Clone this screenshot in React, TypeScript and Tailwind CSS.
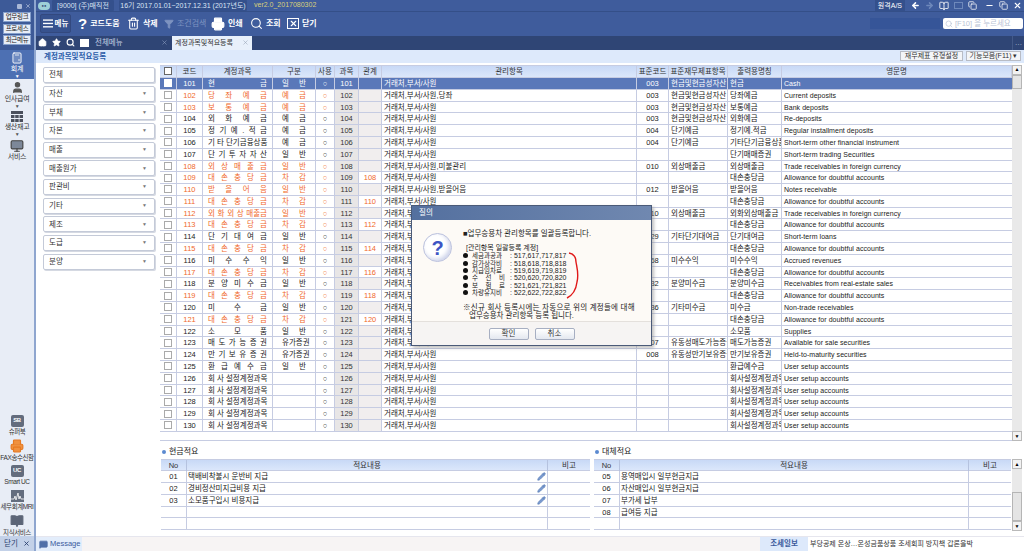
import React from "react";
import { Home, Star, Search, Printer, Trash2, Filter, ArrowLeft, ArrowRight, BookOpen, Minus, X, Calculator, User, Monitor, Pencil, MessageSquareMore, Copy } from "lucide-react";

const KR = "[font-family:'Liberation_Sans','Noto_Sans_CJK_KR',sans-serif]";
const cols = "grid grid-cols-[17px_26px_70px_43px_19px_24px_23px_255px_32px_59px_54px_1fr]";
const heads = ["코드", "계정과목", "구분", "사용", "과목", "관계", "관리항목", "표준코드", "표준재무제표항목", "출력용명칭", "영문명"];
const MG = "거래처,부서/사원";
const AL = "Allowance for doubtful accounts";
const US = "User setup accounts";
const CA = "현금및현금성자산";
type R = [string, string, string, string, string, string, string, string, string, boolean];
const d = (c: string, r: string): R => [c, "대 손 충 당 금", "차 감", r, MG, "", "", "대손충당금", AL, true];
const rows: R[] = [
  ["101", "현 금", "일 반", "", MG, "003", CA, "현금", "Cash", false],
  ["102", "당 좌 예 금", "예 금", "", MG + ",당좌", "003", CA, "당좌예금", "Current deposits", true],
  ["103", "보 통 예 금", "예 금", "", MG, "003", CA, "보통예금", "Bank deposits", true],
  ["104", "외 화 예 금", "예 금", "", MG, "003", CA, "외화예금", "Re-deposits", false],
  ["105", "정 기 예 . 적 금", "예 금", "", MG, "004", "단기예금", "정기예.적금", "Regular installment deposits", false],
  ["106", "기 타 단기금융상품", "예 금", "", MG, "004", "단기예금", "기타단기금융상품", "Short-term other financial instrument", false],
  ["107", "단 기 투 자 자 산", "일 반", "", MG, "", "", "단기매매증권", "Short-term trading Securities", false],
  ["108", "외 상 매 출 금", "일 반", "", MG + ",미불관리", "010", "외상매출금", "외상매출금", "Trade receivables in foreign currency", true],
  d("109", "108"),
  ["110", "받 을 어 음", "일 반", "", MG + ",받을어음", "012", "받을어음", "받을어음", "Notes receivable", true],
  d("111", "110"),
  ["112", "외 화 외 상 매출금", "일 반", "", MG, "010", "외상매출금", "외화외상매출금", "Trade receivables in foreign currency", true],
  d("113", "112"),
  ["114", "단 기 대 여 금", "일 반", "", MG, "029", "기타단기대여금", "단기대여금", "Short-term loans", false],
  d("115", "114"),
  ["116", "미 수 수 익", "일 반", "", MG, "068", "미수수익", "미수수익", "Accrued revenues", false],
  d("117", "116"),
  ["118", "분 양 미 수 금", "일 반", "", MG, "032", "분양미수금", "분양미수금", "Receivables from real-estate sales", false],
  d("119", "118"),
  ["120", "미 수 금", "일 반", "", MG, "036", "기타미수금", "미수금", "Non-trade receivables", false],
  d("121", "120"),
  ["122", "소 모 품", "일 반", "", MG, "", "", "소모품", "Supplies", false],
  ["123", "매 도 가 능 증 권", "유가증권", "", MG, "007", "유동성매도가능증권", "매도가능증권", "Available for sale securities", false],
  ["124", "만 기 보 유 증 권", "유가증권", "", MG, "008", "유동성만기보유증권", "만기보유증권", "Held-to-maturity securities", false],
  ["125", "환 급 예 수 금", "일 반", "", MG, "", "", "환급예수금", US, false],
  ...["126", "127", "128", "129", "130"].map((c): R => [c, "회 사 설정계정과목", "", "", MG, "", "", "회사설정계정과목", US, false]),
];
const filters = ["전체", "자산", "부채", "자본", "매출", "매출원가", "판관비", "기타", "제조", "도급", "분양"];
const Cell = ({ children, className = "" }: { children?: React.ReactNode; className?: string }) => (
  <div className={`h-full overflow-hidden whitespace-nowrap border-r border-[#c6cce2] leading-[11px] ${className}`}>{children}</div>
);
const Scroll = ({ thumbClass }: { thumbClass: string }) => (
  <div className="flex w-[10px] flex-col bg-[#e9e9e9]">
    <div className="flex h-[10px] items-center justify-center border border-[#b9b9b9] bg-[#f2f2f2] text-[5px] leading-none text-black">▲</div>
    <div className={`border border-[#b5b5b5] bg-[#e4e4e4] ${thumbClass}`} />
    <div className="flex-1" />
    <div className="flex h-[10px] items-center justify-center border border-[#b9b9b9] bg-[#f2f2f2] text-[5px] leading-none text-black">▼</div>
  </div>
);
const Tool = ({ icon, label, className = "" }: { icon: React.ReactNode; label: string; className?: string }) => (
  <div className={`flex items-center gap-[3px] whitespace-nowrap text-[8px] font-bold text-white ${className}`}>{icon}<span>{label}</span></div>
);
const RailItem = ({ icon, label, arrow, active }: { icon: React.ReactNode; label: string; arrow?: boolean; active?: boolean }) => (
  <div className={`flex h-[29px] flex-col items-center pt-[2px] text-[7px] leading-[9px] tracking-[-0.3px] ${active ? "bg-[#4d70b3] text-white" : "text-[#333]"}`}>
    <div className="flex h-[13px] items-center">{icon}</div>
    <span className="whitespace-nowrap">{label}</span>
    {arrow && <span className={`text-[5px] leading-[6px] ${active ? "text-white" : "text-[#555]"}`}>▼</span>}
  </div>
);
const Tag = ({ t, color }: { t: string; color: string }) => (
  <div className={`flex h-[12px] w-[13px] items-center justify-center rounded-[2px] text-[6px] font-bold text-white ${color}`}>{t}</div>
);
const Low = ({ icon, label }: { icon: React.ReactNode; label: string }) => (
  <div className="flex h-[25px] flex-col items-center justify-start pt-[3px] text-[6.5px] leading-[9px] tracking-[-0.4px] text-[#333]">
    <div className="flex h-[14px] items-center">{icon}</div>
    <span className="whitespace-nowrap">{label}</span>
  </div>
);
const Mini = ({ title, rows: rs, pencil, className }: { title: string; rows: [string, string][]; pencil?: boolean; className: string }) => (
  <div className={`flex flex-col ${className}`}>
    <div className="flex h-[18px] items-center gap-[3px] pl-[1px] pt-[4px] text-[8px] text-[#222]">
      <span className="h-[4px] w-[4px] rounded-full bg-[#5b8ad0]" />{title}
    </div>
    <div className="grid h-[12px] grid-cols-[26px_1fr_42px] border-y border-[#c6cce2] bg-gradient-to-b from-[#c8d9f6] to-[#dbe7fb] text-center text-[7.5px] leading-[11px] text-[#333]">
      <div className="border-r border-[#b5c2df]">No</div><div className="border-r border-[#b5c2df]">적요내용</div><div>비고</div>
    </div>
    {[0, 1, 2, 3, 4].map((i) => (
      <div key={i} className="grid h-[11.8px] grid-cols-[26px_1fr_42px] border-b border-[#c6cce2] text-[7.5px] leading-[12px] text-[#222]">
        <div className="border-r border-[#c6cce2] text-center">{rs[i]?.[0]}</div>
        <div className="relative overflow-hidden whitespace-nowrap border-r border-[#c6cce2] pl-[1px]">
          {rs[i]?.[1]}
          {pencil && rs[i] && <Pencil className="absolute right-[1px] top-[1px] fill-[#7a9bd0] text-[#5c7fb8]" size={9} />}
        </div>
        <div />
      </div>
    ))}
  </div>
);

export default function App() {
  return (
    <div className={`relative flex h-[551px] w-[1024px] overflow-hidden bg-white text-[7.5px] ${KR}`}>
      {/* rail */}
      <div className="flex w-[36px] shrink-0 flex-col border-r-2 border-[#8fa6cf] bg-[#e8edf6]">
        <div className="flex h-[50px] flex-col bg-[#3d5a98] px-[3px]">
          <div className="flex h-[12px] items-center justify-end gap-[3px] text-[#a9b8d6]">
            <div className="h-[5px] w-[5px] rounded-[1px] bg-[#a9b8d6]" /><X size={6} strokeWidth={3} />
          </div>
          {["업무링크", "프로세스", "최근메뉴"].map((t) => (
            <div key={t} className="mb-[1.5px] flex h-[10px] items-center justify-center border border-[#86a0cc] bg-[#e7edf7] text-[6.5px] tracking-[-0.3px] text-[#222]">{t}</div>
          ))}
        </div>
        <RailItem active arrow label="회계" icon={<Calculator size={12} className="text-white" />} />
        <RailItem arrow label="인사급여" icon={<User size={13} className="fill-[#555] text-[#555]" />} />
        <RailItem arrow label="생산재고" icon={
          <svg width="12" height="11" viewBox="0 0 12 11" fill="#4a4f5c"><rect width="12" height="3" /><rect y="4" width="3.5" height="3" /><rect x="4.2" y="4" width="3.5" height="3" /><rect x="8.5" y="4" width="3.5" height="3" /><rect y="8" width="3.5" height="3" /><rect x="4.2" y="8" width="3.5" height="3" /><rect x="8.5" y="8" width="3.5" height="3" /></svg>
        } />
        <RailItem label="서비스" icon={<Monitor size={14} className="fill-[#7d8899] text-[#444]" />} />
        <div className="flex-1" />
        <Low label="슈퍼북" icon={<Tag t="SB" color="bg-[#636c7d]" />} />
        <Low label="FAX송수신함" icon={<Printer size={14} className="fill-[#f0913f] text-[#e67a22]" />} />
        <Low label="Smart UC" icon={<Tag t="UC" color="bg-[#636c7d]" />} />
        <Low label="세무회계MRI" icon={
          <svg width="13" height="12" viewBox="0 0 13 12"><rect width="13" height="12" fill="#646d7e" /><path d="M0 9h3l1-3 1 4 2-7 1 6 1-3 1 3h3" stroke="#fff" strokeWidth=".8" fill="none" /></svg>
        } />
        <Low label="지식서비스" icon={<BookOpen size={14} className="fill-[#5c6577] text-[#5c6577]" />} />
        <div className="flex h-[15px] items-center justify-center gap-[5px] bg-[#c3d1e8] text-[7.5px] text-[#29406f]">닫기 <X size={7} strokeWidth={3} /></div>
      </div>

      {/* main */}
      <div className="relative flex min-w-0 flex-1 flex-col">
        <div className="flex h-[12px] items-center border-b border-[#344f88] bg-[#3f5c9c] pl-[2px] text-[7px] text-[#dbe4f5]">
          <div className="flex h-[8px] w-[12px] shrink-0 items-center justify-center rounded-full bg-[#9ed0d8] text-[4px] text-[#29406f]">●●</div>
          <div className="ml-[2px] w-[62px] shrink-0 whitespace-nowrap rounded-[1px] bg-[#34508c] text-center leading-[11px]">[9000] (주)매직전</div>
          <div className="ml-[5px] w-[128px] shrink-0 whitespace-nowrap rounded-[1px] bg-[#34508c] text-center leading-[11px]">16기 2017.01.01~2017.12.31 (2017년도)</div>
          <div className="ml-[7px] whitespace-nowrap text-[#d8d07a]">ver2.0_2017080302</div>
          <div className="ml-auto flex items-center gap-[5px] pr-[2px] text-white">
            <span className="mr-[1px] whitespace-nowrap bg-[#34508c] px-[3px] text-[7px] leading-[11px]">원격A/S</span>
            <ArrowLeft size={9} strokeWidth={4} /><ArrowRight size={9} strokeWidth={4} className="text-[#6e88bb]" />
            <BookOpen size={10} /><div className="h-[7px] w-[9px] border border-[#6e88bb]" /><Copy size={9} />
            <Minus size={9} strokeWidth={3} className="ml-[3px]" /><Copy size={9} /><X size={9} strokeWidth={3} />
          </div>
        </div>
        <div className="flex h-[24px] items-center bg-[#3f5c9c] pl-[4px] pr-[1px]">
          <div className="flex h-[19px] w-[31px] items-center justify-center gap-[2px] whitespace-nowrap rounded-[2px] border border-[#33497f] bg-[#37528e] text-[7.5px] font-bold text-white">
            <svg width="10" height="9" viewBox="0 0 11 9" fill="#fff"><rect width="11" height="1.5" /><rect y="3.7" width="11" height="1.5" /><rect y="7.4" width="11" height="1.5" /></svg>메뉴
          </div>
          <Tool className="ml-[7px] w-[49px]" icon={<span className="text-[15px] leading-none">?</span>} label="코드도움" />
          <Tool className="w-[37px]" icon={<Trash2 size={13} />} label="삭제" />
          <div className="flex w-[47px] items-center gap-[3px] whitespace-nowrap text-[8px] text-[#7d93c0]"><Filter size={10} className="fill-[#7d93c0]" /><span>조건검색</span></div>
          <Tool className="w-[39px]" icon={<Printer size={14} className="fill-white text-white" />} label="인쇄" />
          <Tool className="w-[37px]" icon={<Search size={13} />} label="조회" />
          <Tool icon={<div className="flex h-[11px] w-[12px] items-center justify-center border border-white"><X size={9} strokeWidth={3} /></div>} label="닫기" />
          <div className="ml-auto h-[11px] w-[70px] bg-[#365598]" />
          <div className="ml-[3px] flex h-[11px] w-[80px] items-center gap-[2px] whitespace-nowrap rounded-[2px] bg-white pl-[2px] text-[7.5px] text-[#b9c3d5]">
            <Search size={8} />[F10] 을 누르세요
          </div>
        </div>
        <div className="flex h-[14px] items-end bg-[#2f4575] pl-[2px] text-[7.5px]">
          <div className="flex h-full items-center gap-[5px] text-white">
            <Home size={9} className="fill-white" /><Star size={9} className="fill-white" /><Search size={9} strokeWidth={3} />
            <div className="h-[8px] w-[9px] bg-white" /><span className="ml-[1px] w-[61px] text-[#c4cfe3]">전체메뉴</span>
            <X size={7} className="text-[#8c9dbf]" />
          </div>
          <div className="ml-[4px] flex h-[14px] w-[80px] items-center justify-between whitespace-nowrap bg-[#e8f0fb] px-[3px] text-[7px] text-[#333]">
            계정과목및적요등록<X size={7} className="text-[#9aa5b8]" />
          </div>
          <div className="ml-auto flex h-full w-[12px] items-center justify-center border-l border-[#445a88] text-[#b4c0d8]">…</div>
        </div>
        <div className="flex h-[14px] items-center justify-between border-b border-white bg-[#dde9fb] pl-[8px] pr-[3px]">
          <span className="whitespace-nowrap text-[7.5px] font-bold text-[#2a5ba8]">계정과목및적요등록</span>
          <div className="flex gap-[3px] whitespace-nowrap text-[7px] text-[#333]">
            <div className="flex h-[10px] w-[63px] items-center justify-center border border-[#b8bcc5] bg-[#f3f5f8]">재무제표 유형설정</div>
            <div className="flex h-[10px] w-[55px] items-center justify-center border border-[#b8bcc5] bg-[#f3f5f8]">기능모음(F11) ▾</div>
          </div>
        </div>

        <div className="flex h-[378px]">
          <div className="flex w-[124px] shrink-0 flex-col gap-[2.7px] pl-[7px] pr-[5px] pt-[3px]">
            {filters.map((f, i) => (
              <div key={f} className="flex h-[16px] items-center justify-between rounded-[2px] border border-[#c4cad8] bg-white pl-[5px] pr-[7px] text-[7.5px] text-[#333] shadow-[1px_1px_0_#d5d9e2]">
                {f}{i > 0 && <span className="text-[5px] text-[#777]">▼</span>}
              </div>
            ))}
          </div>
          <div className="flex flex-1 pt-[1px]">
            <div className="flex w-[852px] flex-col border-b border-[#c6cce2] text-[7.5px] text-[#222]">
              <div className={`${cols} h-[13px] border-y border-[#c6cce2] bg-gradient-to-b from-[#c8d9f6] to-[#dbe7fb] text-center text-[#333]`}>
                <Cell className="flex items-center justify-center"><div className="h-[8px] w-[8px] border border-[#666] bg-white" /></Cell>
                {heads.map((h) => <Cell key={h}>{h}</Cell>)}
              </div>
              {rows.map((r, i) => {
                const sel = i === 0;
                const tc = sel ? "text-white" : r[9] ? "text-[#f0692c]" : "text-[#222]";
                return (
                  <div key={r[0]} className={`${cols} h-[11.8px] border-b border-[#c6cce2] ${sel ? "bg-[#5a78b9]" : "bg-white"} ${tc}`}>
                    <Cell className="flex items-center justify-center">
                      <div className={`h-[8px] w-[8px] border ${sel ? "border-white bg-white" : "border-[#aaa] bg-white"}`} />
                    </Cell>
                    <Cell className="text-center">{r[0]}</Cell>
                    <Cell className="whitespace-normal px-[5px] [text-align-last:justify]">{r[1]}</Cell>
                    <Cell className="whitespace-normal px-[9px] [text-align-last:justify]">{r[2]}</Cell>
                    <Cell className="text-center">○</Cell>
                    <Cell className={`text-center ${sel ? "" : "bg-[#e8e6e6] text-[#333]"}`}>{r[0]}</Cell>
                    <Cell className={`text-center ${sel ? "" : r[3] ? "" : "bg-[#f1eeee]"}`}>{r[3]}</Cell>
                    <Cell className={`pl-[2px] ${sel ? "" : "text-[#222]"}`}>{r[4]}</Cell>
                    <Cell className={`text-center ${sel ? "" : "text-[#222]"}`}>{r[5]}</Cell>
                    <Cell className={`pl-[2px] ${sel ? "" : "text-[#222]"}`}>{r[6]}</Cell>
                    <Cell className={`pl-[2px] ${sel ? "" : "text-[#222]"}`}>{r[7]}</Cell>
                    <Cell className={`border-r-0 pl-[2px] text-[7px] tracking-[0.05px] ${sel ? "" : "text-[#222]"}`}>{r[8]}</Cell>
                  </div>
                );
              })}
            </div>
            <Scroll thumbClass="h-[14px]" />
          </div>
        </div>

        <div className="flex h-[95px] pl-[125px]">
          <Mini className="w-[429px]" title="현금적요" pencil rows={[["01", "택배비착불시 운반비 지급"], ["02", "경비정산미지급비용 지급"], ["03", "소모품구입시 비용지급"]]} />
          <Mini className="ml-[4px] w-[417px]" title="대체적요" rows={[["05", "용역매입시 일부현금지급"], ["06", "자산매입시 일부현금지급"], ["07", "부가세 납부"], ["08", "급여등 지급"]]} />
          <div className="ml-[1px] mt-[18px] flex h-[72px]"><Scroll thumbClass="mb-[-10px] mt-[23px] h-[29px]" /></div>
        </div>

        <div className="flex h-[15px] items-stretch border-t border-[#e6e6ee] bg-[#f7f4f4] text-[7.5px]">
          <div className="flex w-[46px] items-center gap-[2px] whitespace-nowrap bg-[#e3edfb] pl-[3px] text-[#3a5a9c]">
            <MessageSquareMore size={9} className="fill-[#5170a8] text-[#5170a8]" />Message
          </div>
          <div className="ml-[678px] flex w-[48px] items-center justify-center whitespace-nowrap bg-[#dde9fb] font-bold text-[#3a5a9c]">조세일보</div>
          <div className="flex flex-1 items-center whitespace-nowrap bg-white pl-[2px] text-[7px] text-[#333]">부당공제 온상…온성금품상품 조세회피 방지책 갑론을박</div>
        </div>

        {/* modal */}
        <div className="absolute left-[375px] top-[205px] flex h-[141px] w-[241px] flex-col border border-[#4a5a78] bg-[#fdfaf6] shadow-[2px_2px_3px_#8888]">
          <div className="flex h-[14px] items-center bg-gradient-to-r from-[#54709f] to-[#7088b0] pl-[7px] text-[7.5px] text-white">질의</div>
          <div className="relative flex flex-1 text-[7.5px] text-[#222]">
            <div className="flex w-[51px] shrink-0 justify-center pt-[13px]">
              <div className="flex h-[29px] w-[29px] items-center justify-center rounded-full border border-[#b9bfdc] bg-white text-[20px] font-bold text-[#3d55c4] shadow-[inset_-2px_-2px_4px_#cdd3ea]">?</div>
            </div>
            <div className="flex flex-col whitespace-nowrap pt-[9px]">
              <div className="h-[9px] leading-[9px]">■업무승용차 관리항목를 일괄등록합니다.</div>
              <div className="mt-[6px] h-[8px] pl-[3px] text-[7px] leading-[8px]">[관리항목 일괄등록 계정]</div>
              {[["세금과공과", "517,617,717,817"], ["감가상각비", "518,618,718,818"], ["지급임차료", "519,619,719,819"], ["수 선 비", "520,620,720,820"], ["보 험 료", "521,621,721,821"], ["차량유지비", "522,622,722,822"]].map(([a, b]) => (
                <div key={a} className="flex h-[7.4px] items-center text-[6.5px] leading-[7px]">
                  <div className="mr-[4px] h-[5px] w-[5px] rounded-full bg-[#111]" />
                  <span className="w-[33px] [text-align-last:justify]">{a}</span>
                  <span className="ml-[5px] text-[7px]">: {b}</span>
                </div>
              ))}
              <div className="mt-[8px] h-[8px] leading-[8px] tracking-[0.25px]">※신규 회사 등록시에는 자동으로 위의 계정들에 대해</div>
              <div className="h-[8px] pl-[6px] leading-[8px]">업무승용차 관리항목 등록 됩니다.</div>
            </div>
            <svg className="absolute left-[154px] top-[32px]" width="16" height="48" viewBox="0 0 16 48" fill="none">
              <path d="M3 1 C8 2 10 5 10 10 C11 16 13 22 11 30 C10 38 7 43 1 46" stroke="#e01818" strokeWidth="1.4" />
            </svg>
          </div>
          <div className="flex h-[24px] items-center justify-center gap-[6px] border-t border-[#e4e0dc] bg-[#f6f4f3] text-[7.5px] text-[#333]">
            {["확인", "취소"].map((t) => (
              <div key={t} className="flex h-[12px] w-[40px] items-center justify-center rounded-[2px] border border-[#a7afc2] bg-gradient-to-b from-white to-[#e4e8f0]">{t}</div>
            ))}
          </div>
        </div>
      </div>
    </div>
  );
}
